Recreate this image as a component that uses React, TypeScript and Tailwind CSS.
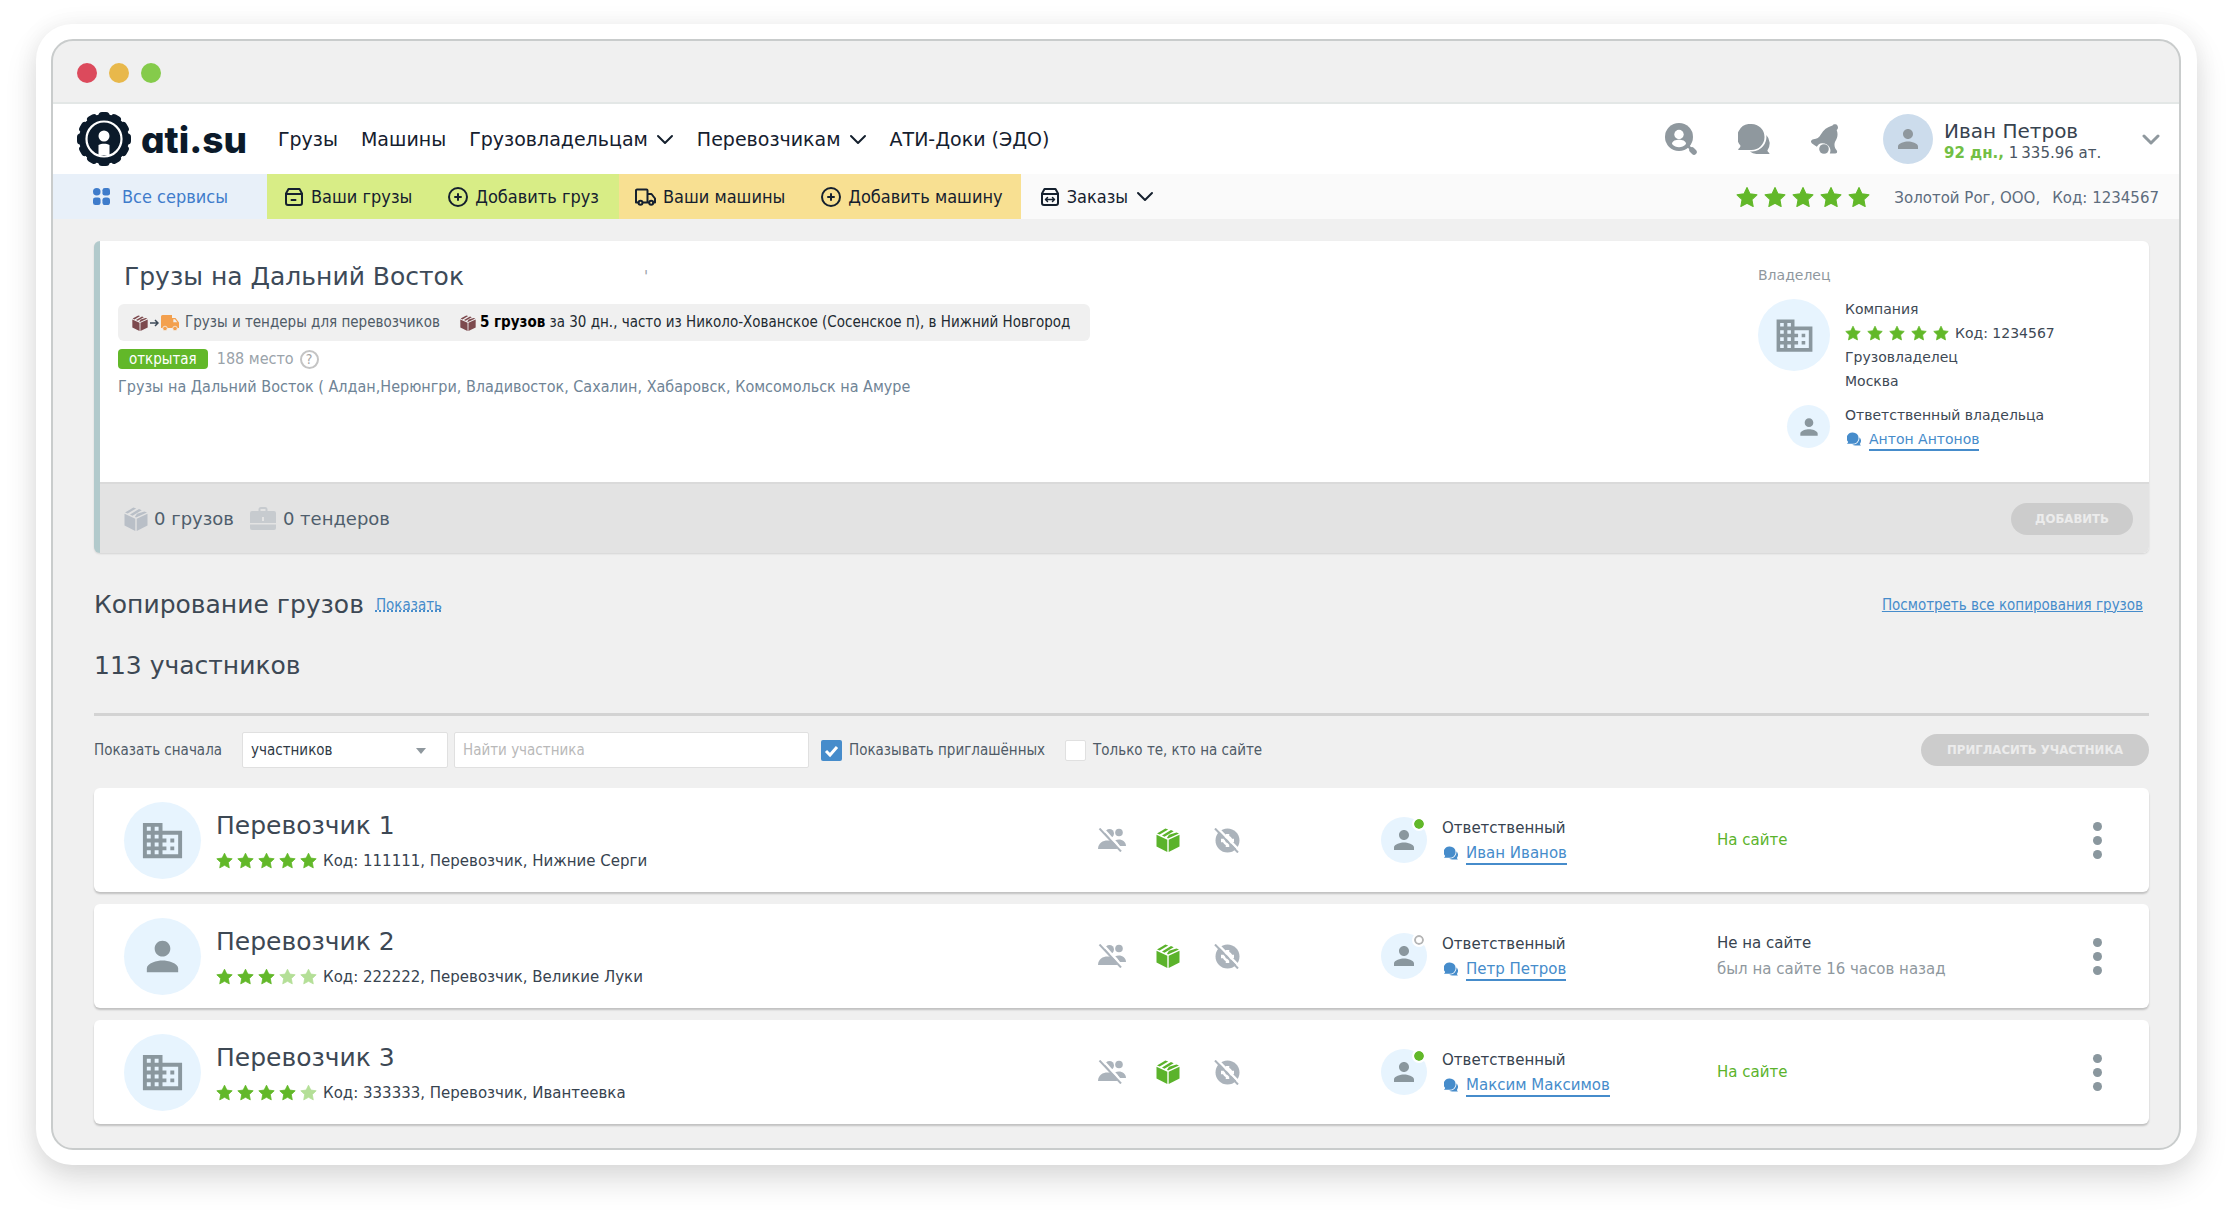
import type { ReactNode } from "react";
import { MdBusiness, MdPerson } from "react-icons/md";

interface IconProps {
  className?: string;
}

interface Member {
  name: string;
  company: boolean;
  rating: number;
  details: string;
  contact: string;
  online: boolean;
  lastSeen?: string;
}

const members: Member[] = [
  {
    name: "Перевозчик 1",
    company: true,
    rating: 5,
    details: "Код: 111111, Перевозчик, Нижние Серги",
    contact: "Иван Иванов",
    online: true,
  },
  {
    name: "Перевозчик 2",
    company: false,
    rating: 3,
    details: "Код: 222222, Перевозчик, Великие Луки",
    contact: "Петр Петров",
    online: false,
    lastSeen: "был на сайте 16 часов назад",
  },
  {
    name: "Перевозчик 3",
    company: true,
    rating: 4,
    details: "Код: 333333, Перевозчик, Ивантеевка",
    contact: "Максим Максимов",
    online: true,
  },
];

const teeth = Array.from({ length: 12 }, (_, i) => i * 30);

const LogoMark = ({ className }: IconProps) => (
  <svg viewBox="0 0 54 54" className={className} aria-hidden="true">
    <g fill="#0b1a2a">
      <circle cx="27" cy="27" r="25" />
      {teeth.map((angle) => (
        <rect
          key={angle}
          x="21.500"
          y="0"
          width="11"
          height="10"
          rx="3.500"
          transform={`rotate(${angle} 27 27)`}
        />
      ))}
    </g>
    <circle cx="27" cy="27" r="17.500" fill="none" stroke="#fff" strokeWidth="2.200" />
    <circle cx="27" cy="24" r="5.500" fill="#fff" />
    <path d="M21.500 43V33c3-1.800 8-1.800 11 0v10z" fill="#fff" />
  </svg>
);

const Chevron = ({ className }: IconProps) => (
  <svg
    viewBox="0 0 18 11"
    className={className}
    fill="none"
    stroke="currentColor"
    strokeLinecap="round"
    strokeLinejoin="round"
    aria-hidden="true"
  >
    <path d="M2 2l7 7 7-7" />
  </svg>
);

const Star = ({ className }: IconProps) => (
  <svg
    viewBox="-0.5 -0.5 21 20"
    className={className}
    fill="currentColor"
    stroke="currentColor"
    strokeLinejoin="round"
    aria-hidden="true"
  >
    <path d="M10 0.500l2.900 6 6.600.9-4.800 4.600 1.200 6.600L10 15.400l-5.900 3.200 1.200-6.600L.5 7.400l6.600-.9z" />
  </svg>
);

const Box = ({ className }: IconProps) => (
  <svg viewBox="0 0 24 24" className={className} fill="currentColor" aria-hidden="true">
    <path d="M.5 6.800l10.800 4.900V24L.5 18.600z" />
    <path d="M23.500 6.800l-10.800 4.900V24l10.800-5.400z" />
    <path d="M1 5.400L9.400.6l2.800 1-8.500 5zM6 7.500l9-5.400 2.700 1.100-9.200 5.500zM11 9.800l2-3 7.500-2.400 2.500 1-11 5.200z" />
  </svg>
);

const Chat = ({ className }: IconProps) => (
  <svg viewBox="0 0 32 30" className={className} fill="currentColor" aria-hidden="true">
    <path d="M13.500 0a13 13 0 0 1 0 26H1c-.8 0-1-.7-.4-1.200 1.500-1.200 2-2.300 1.800-3.400A13 13 0 0 1 13.500 0z" />
    <path d="M28.300 11a12 12 0 0 1 1.200 15.200c-.3 1 .5 1.900 1.700 2.700.6.500.4 1.100-.3 1.100H19.500a11 11 0 0 1-7.600-2.600h2.600A14.500 14.500 0 0 0 28.300 11z" />
  </svg>
);

const PersonSearch = ({ className }: IconProps) => (
  <svg viewBox="0 0 32 32" className={className} fill="currentColor" aria-hidden="true">
    <circle cx="14" cy="14" r="14" />
    <path d="M27 27l2 2" stroke="currentColor" strokeWidth="5.500" strokeLinecap="round" />
    <path d="M22 22l4 4" stroke="currentColor" strokeWidth="2.500" />
    <circle cx="14" cy="11.500" r="4.700" fill="#fff" />
    <path d="M7 21c0-3.500 4-4.300 7-4.300s7 .8 7 4.300c-2 2.200-4.500 3.200-7 3.200S9 23.200 7 21z" fill="#fff" />
  </svg>
);

const Bell = ({ className }: IconProps) => (
  <svg viewBox="0 0 28 30" className={className} fill="currentColor" aria-hidden="true">
    <path d="M21.500 1.500c.8-1.600 4-1.800 5 .2 1 1.800.3 3.300-.8 4.300 1.600 4 .8 8-1.500 11.500-1.500 3-.5 6.500 1.300 8.500 1.200 1.600.7 3.500-1.300 3.500h-5.400a7 7 0 0 0-.3-6.300c-1.500-3-4.500-4.200-7.500-4-2.500.2-4 1.500-5.200 3.600L1 19.500c-2-1.700-.8-4 1.500-4.300 3.500-.3 5.500-1.700 7.500-5C12.500 6 16 3 21.500 1.500z" />
    <circle cx="13" cy="25" r="4.800" />
  </svg>
);

const GridIcon = ({ className }: IconProps) => (
  <svg viewBox="0 0 18 18" className={className} fill="currentColor" aria-hidden="true">
    <circle cx="4" cy="4" r="4" />
    <rect x="10" width="8" height="8" rx="2.500" />
    <rect y="10" width="8" height="8" rx="2.500" />
    <rect x="10" y="10" width="8" height="8" rx="3" />
  </svg>
);

const line = {
  fill: "none",
  stroke: "currentColor",
  strokeWidth: 2,
  strokeLinecap: "round",
  strokeLinejoin: "round",
} as const;

const Crate = ({ className }: IconProps) => (
  <svg viewBox="0 0 18 18" className={className} {...line} aria-hidden="true">
    <path d="M3.500 1h11L17 5.500V15a2 2 0 0 1-2 2H3a2 2 0 0 1-2-2V5.500zM1 6h16M6.500 12h4" />
  </svg>
);

const OrderIcon = ({ className }: IconProps) => (
  <svg viewBox="0 0 18 18" className={className} {...line} aria-hidden="true">
    <path d="M3.500 1h11L17 5.500V15a2 2 0 0 1-2 2H3a2 2 0 0 1-2-2V5.500zM1 6h16" />
    <path d="M5 11.500h8M6.500 9.500l-2 2 2 2M11.500 9.500l2 2-2 2" strokeWidth="1.500" />
  </svg>
);

const PlusCircle = ({ className }: IconProps) => (
  <svg viewBox="0 0 20 20" className={className} {...line} aria-hidden="true">
    <circle cx="10" cy="10" r="9" />
    <path d="M10 7v6M7 10h6" />
  </svg>
);

const TruckLine = ({ className }: IconProps) => (
  <svg viewBox="0 0 21 18" className={className} {...line} aria-hidden="true">
    <path d="M3.500 14.500H1V2.500a1 1 0 0 1 1-1h9.500a1 1 0 0 1 1 1v12H8M12.500 6h4l3.500 4.500v4h-1.500M12.500 14.500h1.500" />
    <circle cx="5.500" cy="14.800" r="2" />
    <circle cx="16.200" cy="14.800" r="2" />
  </svg>
);

const ArrowRight = ({ className }: IconProps) => (
  <svg viewBox="0 0 9 8" className={className} fill="none" stroke="currentColor" aria-hidden="true">
    <path d="M0 4h8M5 1l3 3-3 3" strokeWidth="1.500" />
  </svg>
);

const TruckSolid = ({ className }: IconProps) => (
  <svg viewBox="0 0 18 16" className={className} fill="currentColor" aria-hidden="true">
    <path d="M1.500 0H11v3h3.500L18 7.500V13H0V1.500A1.500 1.500 0 0 1 1.500 0z" />
    <circle cx="4" cy="13.500" r="2.300" stroke="#f0f0f0" strokeWidth=".8" />
    <circle cx="14" cy="13.500" r="2.300" stroke="#f0f0f0" strokeWidth=".8" />
    <path d="M12.300 4.300H14l2.300 3h-4z" fill="#f0f0f0" />
  </svg>
);

const Briefcase = ({ className }: IconProps) => (
  <svg viewBox="0 0 26 23" className={className} fill="currentColor" aria-hidden="true">
    <path
      fillRule="evenodd"
      d="M8.500 4V2.500A2.500 2.500 0 0 1 11 0h4a2.500 2.500 0 0 1 2.500 2.500V4H24a2 2 0 0 1 2 2v10H0V6a2 2 0 0 1 2-2zM10.500 4h5V2h-5zM12 10v4h2v-4z"
    />
    <path d="M0 17.500h26V21a2 2 0 0 1-2 2H2a2 2 0 0 1-2-2z" />
  </svg>
);

const PeopleOff = ({ className }: IconProps) => (
  <svg viewBox="0 0 28 24" className={className} fill="currentColor" aria-hidden="true">
    <circle cx="11.500" cy="5.500" r="4.500" />
    <circle cx="21" cy="4.500" r="3.800" />
    <path d="M0 21c0-6 5-8.500 9.500-8.500S19 15 19 21z" />
    <path d="M17 12.500c5-2.500 11 .5 11 5.500h-7c-.5-2.500-2-4.300-4-5.500z" />
    <path d="M3.500-1L25 23" stroke="#fff" strokeWidth="2.500" />
    <path d="M1.500.5L23 23.500" stroke="currentColor" strokeWidth="2" />
  </svg>
);

const GearOff = ({ className }: IconProps) => (
  <svg viewBox="0 0 26 25" className={className} fill="currentColor" aria-hidden="true">
    <circle cx="13.500" cy="12.500" r="12" />
    <circle cx="13.500" cy="12.500" r="4.800" fill="#fff" />
    <path d="M13.500 6v13M7 12.500h13" stroke="#fff" strokeWidth="3.500" />
    <circle cx="13.500" cy="12.500" r="2.200" />
    <path d="M3.500 0L26 23" stroke="#fff" strokeWidth="2.500" />
    <path d="M1 .5L24 24.500" stroke="currentColor" strokeWidth="2" />
  </svg>
);

const Rating = ({ value, starClass, className }: { value: number; starClass: string; className: string }) => (
  <span className={`flex items-center ${className}`} role="img" aria-label={`Рейтинг ${value} из 5`}>
    {[1, 2, 3, 4, 5].map((n) => (
      <Star key={n} className={`${starClass} ${n <= value ? "text-[#62b829]" : "text-[#b4df97]"}`} />
    ))}
  </span>
);

const ContactLink = ({ children }: { children: ReactNode }) => (
  <span className="flex items-center gap-2">
    <Chat className="ml-[2px] h-[14px] w-[14px] text-[#468ccb]" />
    <a href="#" className="border-b-2 border-[#468ccb] pt-[2px] leading-5 text-[#468ccb]">
      {children}
    </a>
  </span>
);

const Header = () => (
  <header>
    <div className="flex h-[70px] items-center bg-white pr-[19px] pl-6 text-[#15202e]">
      <a href="#" className="flex items-center gap-[10px] text-[#0b1a2a]">
        <LogoMark className="size-[54px]" />
        <span className="font-['Inter',sans-serif] text-[37px] leading-none font-extrabold [font-feature-settings:'cv11']">
          ati.su
        </span>
      </a>
      <nav className="ml-[31px] flex items-center gap-[23px] text-[19px]">
        <a href="#">Грузы</a>
        <a href="#">Машины</a>
        <button className="flex items-center gap-2">
          Грузовладельцам
          <Chevron className="w-[18px] stroke-2" />
        </button>
        <button className="flex items-center gap-2">
          Перевозчикам
          <Chevron className="w-[18px] stroke-2" />
        </button>
        <a href="#">АТИ-Доки (ЭДО)</a>
      </nav>
      <div className="ml-auto flex items-center text-[#8f989e]">
        <button aria-label="Поиск" className="mr-[41px]">
          <PersonSearch className="size-8" />
        </button>
        <button aria-label="Сообщения" className="mr-[41px]">
          <Chat className="h-[30px] w-8" />
        </button>
        <button aria-label="Уведомления" className="mr-11">
          <Bell className="h-[30px] w-7" />
        </button>
        <button className="flex items-center text-left">
          <span className="mr-[11px] flex size-[50px] items-center justify-center rounded-full bg-[#ccdcec]">
            <MdPerson className="size-[30px]" />
          </span>
          <span className="block w-[198px] pt-1">
            <span className="block text-[20px] leading-6 text-[#37434f]">Иван Петров</span>
            <span className="block text-[15px] leading-5 text-[#4a5663]">
              <b className="text-[#72bf44]">92 дн.,</b> 1&thinsp;335.96 ат.
            </span>
          </span>
          <Chevron className="w-[18px] stroke-[3px]" />
        </button>
      </div>
    </div>

    <div className="flex h-[45px] items-stretch bg-[#fafafa] pr-5 text-[#15202e]">
      <div className="flex items-stretch font-['DejaVu_Sans_Condensed','DejaVu_Sans',sans-serif] text-[18px]">
        <a href="#" className="flex w-[214px] items-center gap-3 bg-[#e8f0f9] pl-10 text-[#3f7ccb]">
          <GridIcon className="size-[17px]" />
          Все сервисы
        </a>
        <div className="flex items-center gap-9 bg-[#d8ed86] pr-5 pl-[18px]">
          <a href="#" className="flex items-center gap-2">
            <Crate className="size-[18px]" />
            Ваши грузы
          </a>
          <a href="#" className="flex items-center gap-[7px]">
            <PlusCircle className="size-5" />
            Добавить груз
          </a>
        </div>
        <div className="flex items-center gap-9 bg-[#f8e092] pr-[18px] pl-4">
          <a href="#" className="flex items-center gap-[7px]">
            <TruckLine className="h-[18px] w-[21px]" />
            Ваши машины
          </a>
          <a href="#" className="flex items-center gap-[7px]">
            <PlusCircle className="size-5" />
            Добавить машину
          </a>
        </div>
        <button className="ml-5 flex items-center gap-2">
          <OrderIcon className="size-[18px]" />
          Заказы
          <Chevron className="w-[18px] stroke-2" />
        </button>
      </div>
      <div className="ml-auto flex items-center text-[15px] text-[#5d6c7d]">
        <Rating value={5} starClass="size-[22px]" className="mr-6 gap-[6px]" />
        <p className="flex gap-3 pt-1">
          <span>Золотой Рог, ООО,</span>
          <span>Код: 1234567</span>
        </p>
      </div>
    </div>
  </header>
);

const GroupCard = () => (
  <section className="overflow-hidden rounded-md border-l-[6px] border-[#b2cacc] bg-white shadow-[0_1px_2px_rgba(0,0,0,0.12)]">
    <div className="flex h-[241px] justify-between">
      <div className="pt-4 pl-[18px] font-['DejaVu_Sans_Condensed','DejaVu_Sans',sans-serif] text-[16px]">
        <div className="flex items-center gap-[180px] pl-[6px] font-['DejaVu_Sans',sans-serif]">
          <h1 className="text-[25px] leading-10 text-[#3d4a58]">Грузы на Дальний Восток</h1>
          <span className="text-[15px] text-[#9aa3aa]">'</span>
        </div>
        <div className="mt-[7px] inline-flex h-[37px] items-center rounded-md bg-[#f0f0f0] pr-5 pl-[14px] text-[15px]">
          <Box className="size-4 text-[#7d4a4e]" />
          <ArrowRight className="mx-[2px] h-2 w-[9px] text-[#3d4a58]" />
          <TruckSolid className="mr-[6px] h-4 w-[18px] text-[#f3a04e]" />
          <span className="mr-5 text-[#4f5b67]">Грузы и тендеры для перевозчиков</span>
          <Box className="mr-1 size-4 text-[#7d4a4e]" />
          <span className="text-[#222a31]">
            <b className="text-black">5 грузов</b> за 30 дн., часто из Николо-Хованское (Сосенское п), в Нижний Новгород
          </span>
        </div>
        <div className="mt-2 flex h-5 items-center">
          <span className="flex h-5 items-center rounded-sm bg-[#62b829] px-[11px] text-[15px] text-white">
            открытая
          </span>
          <span className="ml-[9px] text-[#9aa3aa]">188 место</span>
          <button
            aria-label="Справка"
            className="ml-[6px] size-[19px] rounded-full border-2 border-[#c4c4c4] text-[14px] leading-[14px] text-[#a5a5a5]"
          >
            ?
          </button>
        </div>
        <p className="mt-[6px] leading-6 text-[#6f8496]">
          Грузы на Дальний Восток ( Алдан,Нерюнгри, Владивосток, Сахалин, Хабаровск, Комсомольск на Амуре
        </p>
      </div>

      <div className="w-[391px] pt-[22px] text-[14px] text-[#3d4854]">
        <p className="leading-6 text-[#8f989e]">Владелец</p>
        <div className="mt-[10px] flex gap-[15px]">
          <span className="mt-[2px] flex size-[72px] items-center justify-center rounded-full bg-[#e7f4fe]">
            <MdBusiness className="size-[43px] text-[#8a979e]" />
          </span>
          <div className="leading-6">
            <p>Компания</p>
            <div className="flex items-center gap-[6px]">
              <Rating value={5} starClass="size-4" className="gap-[6px]" />
              Код: 1234567
            </div>
            <p>Грузовладелец</p>
            <p>Москва</p>
          </div>
        </div>
        <div className="mt-[10px] flex gap-[15px] pl-[29px]">
          <span className="mt-[2px] flex size-[43px] items-center justify-center rounded-full bg-[#e7f4fe]">
            <MdPerson className="size-[26px] text-[#8a979e]" />
          </span>
          <div className="leading-6">
            <p>Ответственный владельца</p>
            <ContactLink>Антон Антонов</ContactLink>
          </div>
        </div>
      </div>
    </div>

    <div className="flex h-[71px] items-center border-t-2 border-[#dadada] bg-[#e3e3e3] pr-4 pl-6 text-[18px] text-[#4f5e6c]">
      <Box className="mr-[6px] size-6 text-[#b9bfc7]" />
      0 грузов
      <Briefcase className="mr-[7px] ml-4 h-[23px] w-[26px] text-[#c7cbcf]" />
      0 тендеров
      <button className="ml-auto h-8 rounded-full bg-[#ccc] px-6 font-['DejaVu_Sans_Condensed','DejaVu_Sans',sans-serif] text-[13px] font-bold text-[#ececec]">
        ДОБАВИТЬ
      </button>
    </div>
  </section>
);

const Filters = () => (
  <form className="mt-4 flex h-9 items-center font-['DejaVu_Sans_Condensed','DejaVu_Sans',sans-serif] text-[15px] text-[#4f5b67]">
    <label htmlFor="order" className="mr-5">
      Показать сначала
    </label>
    <div className="relative mr-[6px]">
      <select
        id="order"
        className="h-9 w-[206px] appearance-none rounded-xs border border-[#e0e0e0] bg-white pl-2 text-[#2f3a45]"
      >
        <option>участников</option>
      </select>
      <svg viewBox="0 0 10 6" className="pointer-events-none absolute top-4 right-[22px] h-[6px] w-[10px] fill-[#8f989e]">
        <path d="M0 0h10L5 6z" />
      </svg>
    </div>
    <input
      type="text"
      aria-label="Найти участника"
      placeholder="Найти участника"
      className="mr-3 h-9 w-[355px] rounded-xs border border-[#e0e0e0] bg-white pl-2 placeholder:text-[#b9b9b9]"
    />
    <label className="mr-5 flex items-center gap-[7px]">
      <span className="relative flex size-[21px]">
        <input
          type="checkbox"
          defaultChecked
          className="size-[21px] appearance-none rounded-xs bg-white checked:bg-[#468ccb]"
        />
        <svg viewBox="0 0 21 21" className="pointer-events-none absolute inset-0 fill-none stroke-white stroke-3">
          <path d="M5 11l4 4 7-8" />
        </svg>
      </span>
      Показывать приглашённых
    </label>
    <label className="flex items-center gap-[7px]">
      <input type="checkbox" className="size-[21px] appearance-none rounded-xs border border-[#e0e0e0] bg-white" />
      Только те, кто на сайте
    </label>
    <button type="button" className="ml-auto h-8 rounded-full bg-[#ccc] px-[26px] text-[13px] font-bold text-[#ececec]">
      ПРИГЛАСИТЬ УЧАСТНИКА
    </button>
  </form>
);

const MemberRow = ({ member }: { member: Member }) => (
  <li className="grid h-[104px] grid-cols-[1004fr_283fr_336fr_432fr] items-center rounded-md bg-white text-[15px] text-[#37434f] shadow-[0_2px_2px_rgba(0,0,0,0.2)]">
    <div className="flex items-center gap-[15px] pl-[30px]">
      <span className="flex size-[77px] items-center justify-center rounded-full bg-[#e7f4fe] text-[#8a979e]">
        {member.company ? <MdBusiness className="size-[47px]" /> : <MdPerson className="size-[47px]" />}
      </span>
      <div className="pt-[2px]">
        <h3 className="text-[25px] leading-9 text-[#3d4854]">{member.name}</h3>
        <div className="mt-[3px] flex items-center gap-[6px] leading-7">
          <Rating value={member.rating} starClass="size-[17px]" className="gap-1" />
          {member.details}
        </div>
      </div>
    </div>
    <div className="flex items-center text-[#abb3bb]">
      <PeopleOff className="mr-[30px] h-6 w-7" />
      <Box className="mr-[34px] size-6 text-[#5bb32b]" />
      <GearOff className="h-[25px] w-[26px]" />
    </div>
    <div className="flex items-center gap-[15px]">
      <span className="relative flex size-[46px] items-center justify-center rounded-full bg-[#e7f4fe]">
        <MdPerson className="size-[30px] text-[#8a979e]" />
        <span
          className={`absolute top-[2px] right-[3px] size-[10px] rounded-full outline-2 outline-white ${
            member.online ? "bg-[#62b829]" : "border-2 border-[#b5b5b5] bg-white"
          }`}
        />
      </span>
      <div className="leading-[26px]">
        <p>Ответственный</p>
        <ContactLink>{member.contact}</ContactLink>
      </div>
    </div>
    <div className="flex items-center justify-between pr-[47px] leading-[26px]">
      {member.online ? (
        <p className="text-[#5bb32b]">На сайте</p>
      ) : (
        <div>
          <p>Не на сайте</p>
          <p className="text-[#8f989e]">{member.lastSeen}</p>
        </div>
      )}
      <button aria-label="Действия" className="flex flex-col gap-[5px]">
        <span className="size-[9px] rounded-full bg-[#8a979e]" />
        <span className="size-[9px] rounded-full bg-[#8a979e]" />
        <span className="size-[9px] rounded-full bg-[#8a979e]" />
      </button>
    </div>
  </li>
);

export default function App() {
  return (
    <div className="bg-white px-9 pt-6 pb-12 font-['DejaVu_Sans',Verdana,sans-serif]">
      <div className="rounded-[36px] bg-white p-[15px] pr-4 shadow-[0_16px_32px_rgba(0,0,0,0.13),0_0_24px_rgba(0,0,0,0.06)]">
        <div className="overflow-hidden rounded-[22px] border-2 border-[#c9cccc] bg-[#f0f0f0]">
          <div className="flex h-[63px] items-center gap-3 border-b-2 border-[#e3e7e6] pt-[2px] pl-6">
            <span className="size-5 rounded-full bg-[#dc4a5c]" />
            <span className="size-5 rounded-full bg-[#e8b84b]" />
            <span className="size-5 rounded-full bg-[#85cb4b]" />
          </div>
          <Header />
          <main className="pt-[22px] pr-[30px] pb-6 pl-[41px]">
            <GroupCard />
            <div className="mt-8 flex items-center pr-[6px]">
              <h2 className="text-[25px] leading-10 text-[#3d4854]">Копирование грузов</h2>
              <a
                href="#"
                className="ml-3 font-['DejaVu_Sans_Condensed','DejaVu_Sans',sans-serif] text-[15px] text-[#468ccb] underline decoration-dotted decoration-2"
              >
                Показать
              </a>
              <a
                href="#"
                className="ml-auto font-['DejaVu_Sans_Condensed','DejaVu_Sans',sans-serif] text-[15px] text-[#468ccb] underline"
              >
                Посмотреть все копирования грузов
              </a>
            </div>
            <h2 className="mt-[21px] border-b-[3px] border-[#d3d3d3] pb-[27px] text-[25px] leading-10 text-[#3d4854]">
              113 участников
            </h2>
            <Filters />
            <ul className="mt-5 flex flex-col gap-3">
              {members.map((member) => (
                <MemberRow key={member.name} member={member} />
              ))}
            </ul>
          </main>
        </div>
      </div>
    </div>
  );
}
